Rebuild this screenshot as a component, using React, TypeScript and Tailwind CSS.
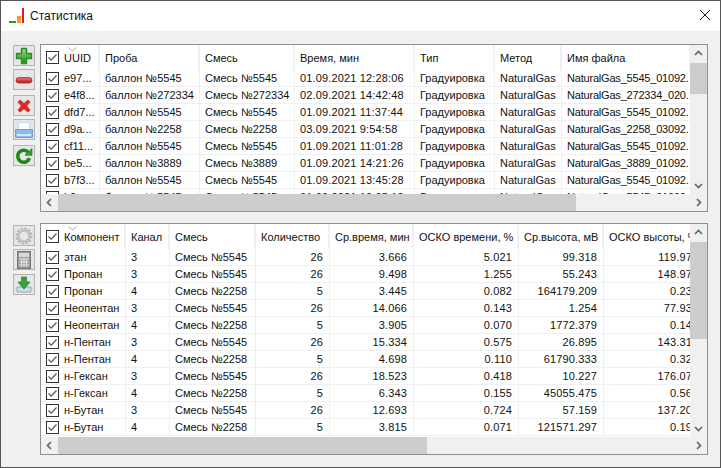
import React from "react";

const topCols = [59, 100, 95, 120, 80, 67, 129];
const botCols = [85, 44, 86, 74, 84, 105, 85, 95];

const topHead = ["UUID", "Проба", "Смесь", "Время, мин", "Тип", "Метод", "Имя файла"];
const topRows = [
  ["e97...", "баллон №5545", "Смесь №5545", "01.09.2021 12:28:06", "Градуировка", "NaturalGas", "NaturalGas_5545_01092."],
  ["e4f8...", "баллон №272334", "Смесь №272334", "02.09.2021 14:42:48", "Градуировка", "NaturalGas", "NaturalGas_272334_020."],
  ["dfd7...", "баллон №5545", "Смесь №5545", "01.09.2021 11:37:44", "Градуировка", "NaturalGas", "NaturalGas_5545_01092."],
  ["d9a...", "баллон №2258", "Смесь №2258", "03.09.2021 9:54:58", "Градуировка", "NaturalGas", "NaturalGas_2258_03092."],
  ["cf11...", "баллон №5545", "Смесь №5545", "01.09.2021 11:01:28", "Градуировка", "NaturalGas", "NaturalGas_5545_01092."],
  ["be5...", "баллон №3889", "Смесь №3889", "01.09.2021 14:21:26", "Градуировка", "NaturalGas", "NaturalGas_3889_01092."],
  ["b7f3...", "баллон №5545", "Смесь №5545", "01.09.2021 13:45:28", "Градуировка", "NaturalGas", "NaturalGas_5545_01092."],
  ["b2c...", "баллон №5545", "Смесь №5545", "01.09.2021 10:25:12", "Градуировка", "NaturalGas", "NaturalGas_5545_01092."],
];

const botHead = ["Компонент", "Канал", "Смесь", "Количество", "Ср.время, мин", "ОСКО времени, %", "Ср.высота, мВ", "ОСКО высоты, %"];
const botRows = [
  ["этан", "3", "Смесь №5545", "26", "3.666", "5.021", "99.318", "119.97"],
  ["Пропан", "3", "Смесь №5545", "26", "9.498", "1.255", "55.243", "148.97"],
  ["Пропан", "4", "Смесь №2258", "5", "3.445", "0.082", "164179.209", "0.23"],
  ["Неопентан", "3", "Смесь №5545", "26", "14.066", "0.143", "1.254", "77.93"],
  ["Неопентан", "4", "Смесь №2258", "5", "3.905", "0.070", "1772.379", "0.14"],
  ["н-Пентан", "3", "Смесь №5545", "26", "15.334", "0.575", "26.895", "143.31"],
  ["н-Пентан", "4", "Смесь №2258", "5", "4.698", "0.110", "61790.333", "0.32"],
  ["н-Гексан", "3", "Смесь №5545", "26", "18.523", "0.418", "10.227", "176.07"],
  ["н-Гексан", "4", "Смесь №2258", "5", "6.343", "0.155", "45055.475", "0.56"],
  ["н-Бутан", "3", "Смесь №5545", "26", "12.693", "0.724", "57.159", "137.20"],
  ["н-Бутан", "4", "Смесь №2258", "5", "3.815", "0.071", "121571.297", "0.19"],
];

function Check() {
  return (
    <span className="w-[13px] h-[13px] shrink-0 border border-[#333] bg-white flex items-center justify-center">
      <svg width="11" height="11" viewBox="0 0 11 11">
        <path d="M1.5 5.5 L4.2 8.2 L9.5 2.5" fill="none" stroke="#555" strokeWidth="1.2" />
      </svg>
    </span>
  );
}

function Chevron({ dir }: { dir: "up" | "down" | "left" | "right" }) {
  const d = {
    up: "M1 6 L4.5 2.5 L8 6",
    down: "M1 3 L4.5 6.5 L8 3",
    left: "M6 1 L2.5 4.5 L6 8",
    right: "M3 1 L6.5 4.5 L3 8",
  }[dir];
  return (
    <svg width="9" height="9" viewBox="0 0 9 9">
      <path d={d} fill="none" stroke="#666" strokeWidth="1.7" />
    </svg>
  );
}

function textClass(c: string) {
  if (c.startsWith("NaturalGas_")) return "tracking-[-0.2px]";
  if (/^[\d.: ]+$/.test(c)) return "tracking-[0.15px]";
  return "";
}

function Table({
  cols,
  head,
  rows,
  right,
}: {
  cols: number[];
  head: string[];
  rows: string[][];
  right: number[];
}) {
  return (
    <div className="flex-1 min-w-0 min-h-0 overflow-hidden bg-white">
      <div className="flex h-[25px] w-max">
        {head.map((h, i) => (
          <div
            key={h}
            style={{ width: cols[i] }}
            className={`relative h-full flex items-center shrink-0 whitespace-nowrap border-r-2 border-[#f0f0f0] ${i === 0 ? "pl-[5px] gap-[5px]" : "pl-[5px]"}`}
          >
            {i === 0 && (
              <>
                <Check />
                <svg className="absolute left-[27px] top-[2px]" width="9" height="5" viewBox="0 0 9 5">
                  <path d="M0.5 0.5 L4.5 4 L8.5 0.5" fill="none" stroke="#aaa" strokeWidth="1" />
                </svg>
              </>
            )}
            <span className="pt-[1px]">{h}</span>
          </div>
        ))}
      </div>
      {rows.map((r, ri) => (
        <div key={ri} className="flex h-[17px] w-max border-b border-[#f0f0f0]">
          {r.map((c, i) => (
            <div
              key={i}
              style={{ width: cols[i] }}
              className={`h-full flex items-center shrink-0 whitespace-nowrap overflow-hidden border-r border-[#f0f0f0] ${i === 0 ? "pl-[5px] gap-[5px]" : right.includes(i) ? "pl-[5px] pr-[6px] justify-end" : "px-[5px]"}`}
            >
              {i === 0 && <Check />}
              <span className={`pt-[1px] ${textClass(c)}`}>{c}</span>
            </div>
          ))}
        </div>
      ))}
    </div>
  );
}

function Panel({
  cols,
  head,
  rows,
  right,
  vThumbH,
  hThumbW,
  heightClass,
}: {
  cols: number[];
  head: string[];
  rows: string[][];
  right: number[];
  vThumbH: string;
  hThumbW: string;
  heightClass: string;
}) {
  return (
    <div className={`border border-[#8f8f8f] flex flex-col bg-[#f0f0f0] ${heightClass}`}>
      <div className="flex flex-1 min-h-0">
        <Table cols={cols} head={head} rows={rows} right={right} />
        <div className="w-[17px] shrink-0 flex flex-col items-center">
          <div className="h-[17px] flex items-center justify-center shrink-0">
            <Chevron dir="up" />
          </div>
          <div className="flex-1 w-full">
            <div className={`bg-[#cdcdcd] w-full mt-[1px] ${vThumbH}`} />
          </div>
          <div className="h-[17px] flex items-center justify-center shrink-0">
            <Chevron dir="down" />
          </div>
        </div>
      </div>
      <div className="h-[17px] shrink-0 flex items-center">
        <div className="w-[17px] flex justify-center shrink-0">
          <Chevron dir="left" />
        </div>
        <div className="flex-1 h-full">
          <div className={`bg-[#cdcdcd] h-full ${hThumbW}`} />
        </div>
        <div className="w-[17px] flex justify-center shrink-0">
          <Chevron dir="right" />
        </div>
      </div>
    </div>
  );
}

function ToolBtn({ children, className = "" }: { children: React.ReactNode; className?: string }) {
  return (
    <div className={`w-[22px] h-[21px] bg-[#e6e6e6] border border-[#b4b4b4] flex items-center justify-center ${className}`}>
      {children}
    </div>
  );
}

export default function App() {
  return (
    <div
      className="w-[721px] h-[468px] border border-[#555] bg-[#f0f0f0] flex flex-col overflow-hidden text-[11px] leading-none text-[#111]"
      style={{ fontFamily: '"Liberation Sans", "Noto Sans", sans-serif' }}
    >
      <header className="h-[30px] bg-white flex items-center shrink-0">
        <svg className="ml-[8px] mr-[5px]" width="16" height="16" viewBox="0 0 16 16">
          <rect x="0" y="13" width="7" height="2" fill="#22a01c" />
          <rect x="8" y="8" width="4" height="7" fill="#f0a030" />
          <rect x="13" y="0" width="2" height="15" fill="#e01c1c" />
        </svg>
        <span className="text-[12px]">Статистика</span>
        <svg className="ml-auto mr-[9px] -mt-[2px]" width="12" height="12" viewBox="0 0 12 12">
          <path d="M1 1 L11 11 M11 1 L1 11" stroke="#222" strokeWidth="1" fill="none" />
        </svg>
      </header>

      <main className="flex-1 min-h-0 flex pl-[12px] pt-[13px] pr-[12px] gap-[5px]">
        <div className="w-[22px] shrink-0 flex flex-col">
          <div className="flex flex-col mt-[1px] mb-[59px]">
            <ToolBtn>
              <svg width="18" height="18" viewBox="0 0 18 18">
                <defs>
                  <linearGradient id="g1" x1="0" y1="0" x2="0" y2="1">
                    <stop offset="0" stopColor="#8fe07a" />
                    <stop offset="1" stopColor="#1c8a1c" />
                  </linearGradient>
                </defs>
                <path d="M6.5 1.5 H11.5 V6.5 H16.5 V11.5 H11.5 V16.5 H6.5 V11.5 H1.5 V6.5 H6.5 Z" fill="url(#g1)" stroke="#2d8a2d" strokeLinejoin="round" strokeWidth="1.4" />
              </svg>
            </ToolBtn>
            <ToolBtn className="mt-[3px]">
              <svg width="18" height="10" viewBox="0 0 18 10">
                <defs>
                  <linearGradient id="g2" x1="0" y1="0" x2="0" y2="1">
                    <stop offset="0" stopColor="#f07878" />
                    <stop offset="1" stopColor="#b81818" />
                  </linearGradient>
                </defs>
                <rect x="1" y="2.5" width="16" height="5.5" rx="2.7" fill="url(#g2)" stroke="#a82020" strokeWidth="0.7" />
              </svg>
            </ToolBtn>
            <ToolBtn className="mt-[5px]">
              <svg width="14" height="14" viewBox="0 0 16 16">
                <path d="M3.5 1 L8 5 L12.5 1 L15 3.5 L11 8 L15 12.5 L12.5 15 L8 11 L3.5 15 L1 12.5 L5 8 L1 3.5 Z" fill="#e02828" stroke="#b01c1c" strokeWidth="0.7" strokeLinejoin="round" />
              </svg>
            </ToolBtn>
            <ToolBtn className="mt-[3px]">
              <svg width="20" height="18" viewBox="0 0 20 18">
                <rect x="4.5" y="1.5" width="11" height="8" fill="#fff" stroke="#c4d8ee" />
                <path d="M1.5 8.5 H18.5 V16.5 H1.5 Z" fill="#8fb8ec" stroke="#6d9cd8" />
                <rect x="3" y="13" width="14" height="2" fill="#d6e6fa" />
              </svg>
            </ToolBtn>
            <ToolBtn className="mt-[5px]">
              <svg width="18" height="18" viewBox="0 0 18 18">
                <path d="M13.2 5.2 A6 6 0 1 0 14.4 11.2" fill="none" stroke="#178a17" strokeWidth="3.6" />
                <path d="M10 8.2 H17 V1.5 Z" fill="#2aa82a" stroke="#0e6e0e" strokeWidth="0.6" strokeLinejoin="round" />
              </svg>
            </ToolBtn>
          </div>
          <div className="flex flex-col">
            <ToolBtn>
              <svg width="18" height="18" viewBox="0 0 18 18">
                <circle cx="9" cy="9" r="5.6" fill="none" stroke="#c0c0c0" strokeWidth="2.6" />
                <circle cx="9" cy="9" r="7.6" fill="none" stroke="#b8b8b8" strokeWidth="2" strokeDasharray="2.4 1.6" />
              </svg>
            </ToolBtn>
            <ToolBtn className="mt-[3px]">
              <svg width="14" height="18" viewBox="0 0 14 18">
                <rect x="0.5" y="0.5" width="13" height="17" fill="#9a9a9a" stroke="#777" />
                <rect x="2" y="2" width="10" height="4" fill="#d8d8d8" />
                <path d="M2 8 H12 M2 11 H12 M2 14 H12 M4.5 7 V16 M7 7 V16 M9.5 7 V16" stroke="#e4e4e4" strokeWidth="1" />
              </svg>
            </ToolBtn>
            <ToolBtn className="mt-[4px]">
              <svg width="16" height="17" viewBox="0 0 16 17">
                <path d="M1 11 H15 V16 H1 Z" fill="#d0dce8" stroke="#8fa8c0" />
                <path d="M5.5 1 H10.5 V6 H14 L8 13 L2 6 H5.5 Z" fill="#3ca03c" stroke="#1e7e1e" strokeWidth="0.7" />
              </svg>
            </ToolBtn>
          </div>
        </div>

        <div className="flex-1 min-w-0 flex flex-col">
          <Panel
            cols={topCols}
            head={topHead}
            rows={topRows}
            right={[]}
            vThumbH="h-[31px]"
            hThumbW="w-[518px]"
            heightClass="h-[168px] shrink-0"
          />
          <div className="h-[11px] shrink-0" />
          <Panel
            cols={botCols}
            head={botHead}
            rows={botRows}
            right={[3, 4, 5, 6, 7]}
            vThumbH="h-[97px]"
            hThumbW="w-[369px]"
            heightClass="h-[232px] shrink-0"
          />
        </div>
      </main>
    </div>
  );
}
